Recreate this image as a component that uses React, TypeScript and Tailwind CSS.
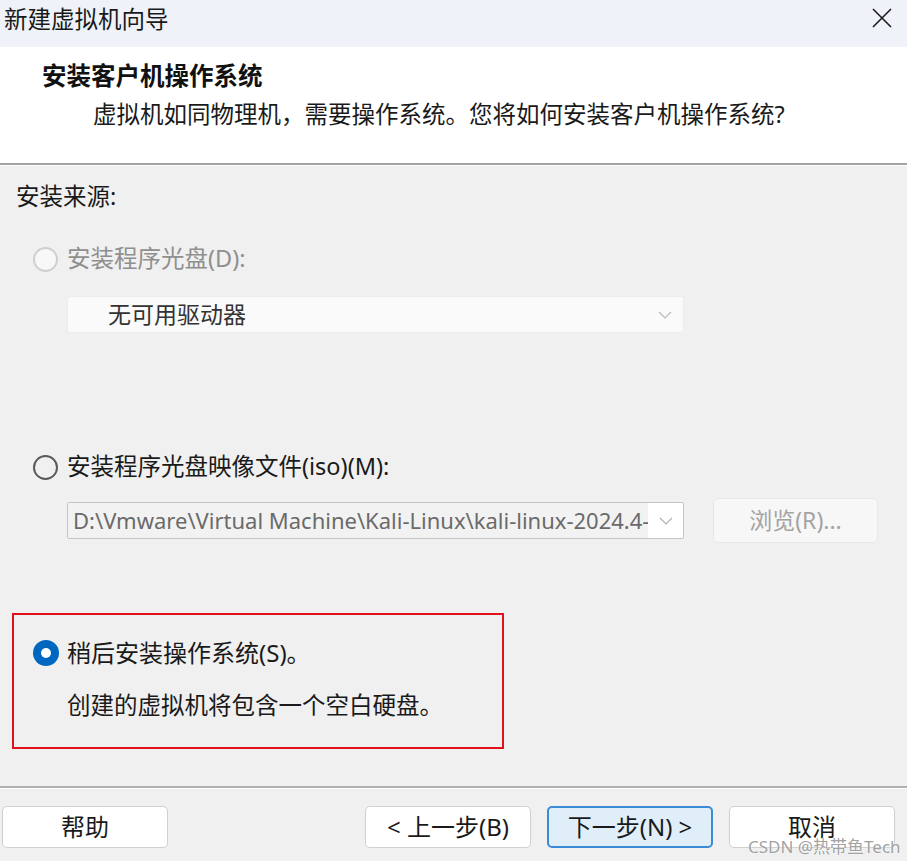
import React from 'react';

const FONT = { fontFamily: '"Noto Sans", "Noto Sans CJK SC", sans-serif' };

const Chevron = ({ color = '#a8a8a8' }: { color?: string }) => (
    <svg width="14" height="8" viewBox="0 0 14 8" fill="none">
        <polyline points="1 1 7 7 13 1" stroke={color} strokeWidth="1.2" />
    </svg>
);

const Radio = ({ state }: { state: 'disabled' | 'off' | 'on' }) => {
    if (state === 'on') {
        return (
            <div className="w-[26px] h-[26px] rounded-full bg-[#0067c0] flex items-center justify-center shrink-0">
                <div className="w-[10px] h-[10px] rounded-full bg-white" />
            </div>
        );
    }
    if (state === 'disabled') {
        return <div className="w-[25px] h-[25px] rounded-full border-2 border-[#cfcfcf] bg-[#f8f8f8] shrink-0" />;
    }
    return <div className="w-[25px] h-[25px] rounded-full border-2 border-[#5a5a5a] shrink-0" />;
};

const Button = ({ label, primary }: { label: string; primary?: boolean }) => (
    <button
        className={
            primary
                ? 'w-[166px] h-[42px] rounded-[5px] border-2 border-[#3b8ad8] bg-[#e0eef9] text-[24px] text-[#1a1a1a]'
                : 'w-[166px] h-[42px] rounded-[5px] border border-[#d0d0d0] bg-white text-[24px] text-[#1a1a1a]'
        }
    >
        {label}
    </button>
);

export default function App() {
    return (
        <div className="relative w-[907px] h-[861px] flex flex-col bg-[#f0f0f0] overflow-hidden" style={FONT}>
            {/* title bar */}
            <div className="h-[47px] bg-[#eff2f9] flex items-start justify-between">
                <span className="pl-[4px] pt-[4px] text-[23.5px] leading-[30px] text-[#1a1a1a]">新建虚拟机向导</span>
                <svg className="mt-[8px] mr-[15px]" width="20" height="20" viewBox="0 0 20 20">
                    <path d="M1 1 L19 19 M19 1 L1 19" stroke="#1a1a1a" strokeWidth="1.6" />
                </svg>
            </div>

            {/* header */}
            <div className="h-[116px] bg-white pl-[42px] pt-[14px] flex flex-col">
                <span className="text-[24.5px] leading-[30px] font-bold text-[#111]">安装客户机操作系统</span>
                <span className="mt-[8px] ml-[51px] text-[23.5px] leading-[30px] text-[#1a1a1a]">
                    虚拟机如同物理机，需要操作系统。您将如何安装客户机操作系统?
                </span>
            </div>
            <div className="h-[2px] bg-[#a3a3a3]" />
            <div className="h-[1px] bg-white" />

            {/* body */}
            <div className="flex-1 flex flex-col pt-[15px]">
                <span className="pl-[16px] text-[23.5px] leading-[30px] text-[#1a1a1a]">安装来源:</span>

                <div className="mt-[33px] pl-[33px] flex items-center gap-[9px] h-[30px]">
                    <Radio state="disabled" />
                    <span className="text-[23.5px] text-[#8f8f8f]">安装程序光盘(D):</span>
                </div>
                <div className="mt-[22px] ml-[67px] w-[617px] h-[37px] bg-[#fafafa] border border-[#ececec] rounded-[3px] flex items-center justify-between pl-[40px] pr-[11px]">
                    <span className="text-[23px] text-[#333]">无可用驱动器</span>
                    <Chevron color="#b8b8b8" />
                </div>

                <div className="mt-[119px] pl-[33px] flex items-center gap-[9px] h-[30px]">
                    <Radio state="off" />
                    <span className="text-[23.5px] text-[#1a1a1a]">安装程序光盘映像文件(iso)(M):</span>
                </div>
                <div className="mt-[16px] flex items-center h-[45px]">
                    <div className="ml-[67px] w-[617px] h-[37px] bg-white border border-[#c4c4c4] rounded-[2px] flex items-center overflow-hidden">
                        <span className="w-[580px] h-full bg-[#f2f2f2] pl-[5px] text-[22px] leading-[35px] text-[#6a6a6a] whitespace-nowrap overflow-hidden">
                            D:\Vmware\Virtual Machine\Kali-Linux\kali-linux-2024.4-
                        </span>
                        <div className="flex-1 flex justify-center">
                            <Chevron color="#b0b0b0" />
                        </div>
                    </div>
                    <div className="ml-[29px] w-[165px] h-[45px] rounded-[5px] bg-[#f7f7f7] border border-[#e8e8e8] flex items-center justify-center text-[23px] text-[#a3a3a3]">
                        浏览(R)...
                    </div>
                </div>

                {/* highlighted option */}
                <div className="mt-[70px] ml-[12px] w-[492px] h-[136px] border-2 border-[#e2101c] flex flex-col pt-[23px] pl-[19px]">
                    <div className="flex items-center gap-[8px] h-[30px]">
                        <Radio state="on" />
                        <span className="text-[24px] text-[#1a1a1a]">稍后安装操作系统(S)。</span>
                    </div>
                    <span className="mt-[22px] ml-[34px] text-[23.5px] leading-[30px] text-[#1a1a1a]">创建的虚拟机将包含一个空白硬盘。</span>
                </div>
            </div>

            <div className="h-[2px] bg-[#b0b0b0]" />
            <div className="h-[1px] bg-white" />

            {/* footer */}
            <div className="h-[72px] pt-[17px] flex items-start">
                <div className="ml-[2px]">
                    <Button label="帮助" />
                </div>
                <div className="ml-[197px] flex gap-[16px]">
                    <Button label="< 上一步(B)" />
                    <Button label="下一步(N) >" primary />
                    <Button label="取消" />
                </div>
            </div>

            {/* watermark */}
            <span
                className="absolute left-[748px] top-[834px] text-[17px] text-[#8a8a8a]/80 whitespace-nowrap"
                style={{ textShadow: '0 0 2px #fff' }}
            >
                CSDN @热带鱼Tech
            </span>
        </div>
    );
}
